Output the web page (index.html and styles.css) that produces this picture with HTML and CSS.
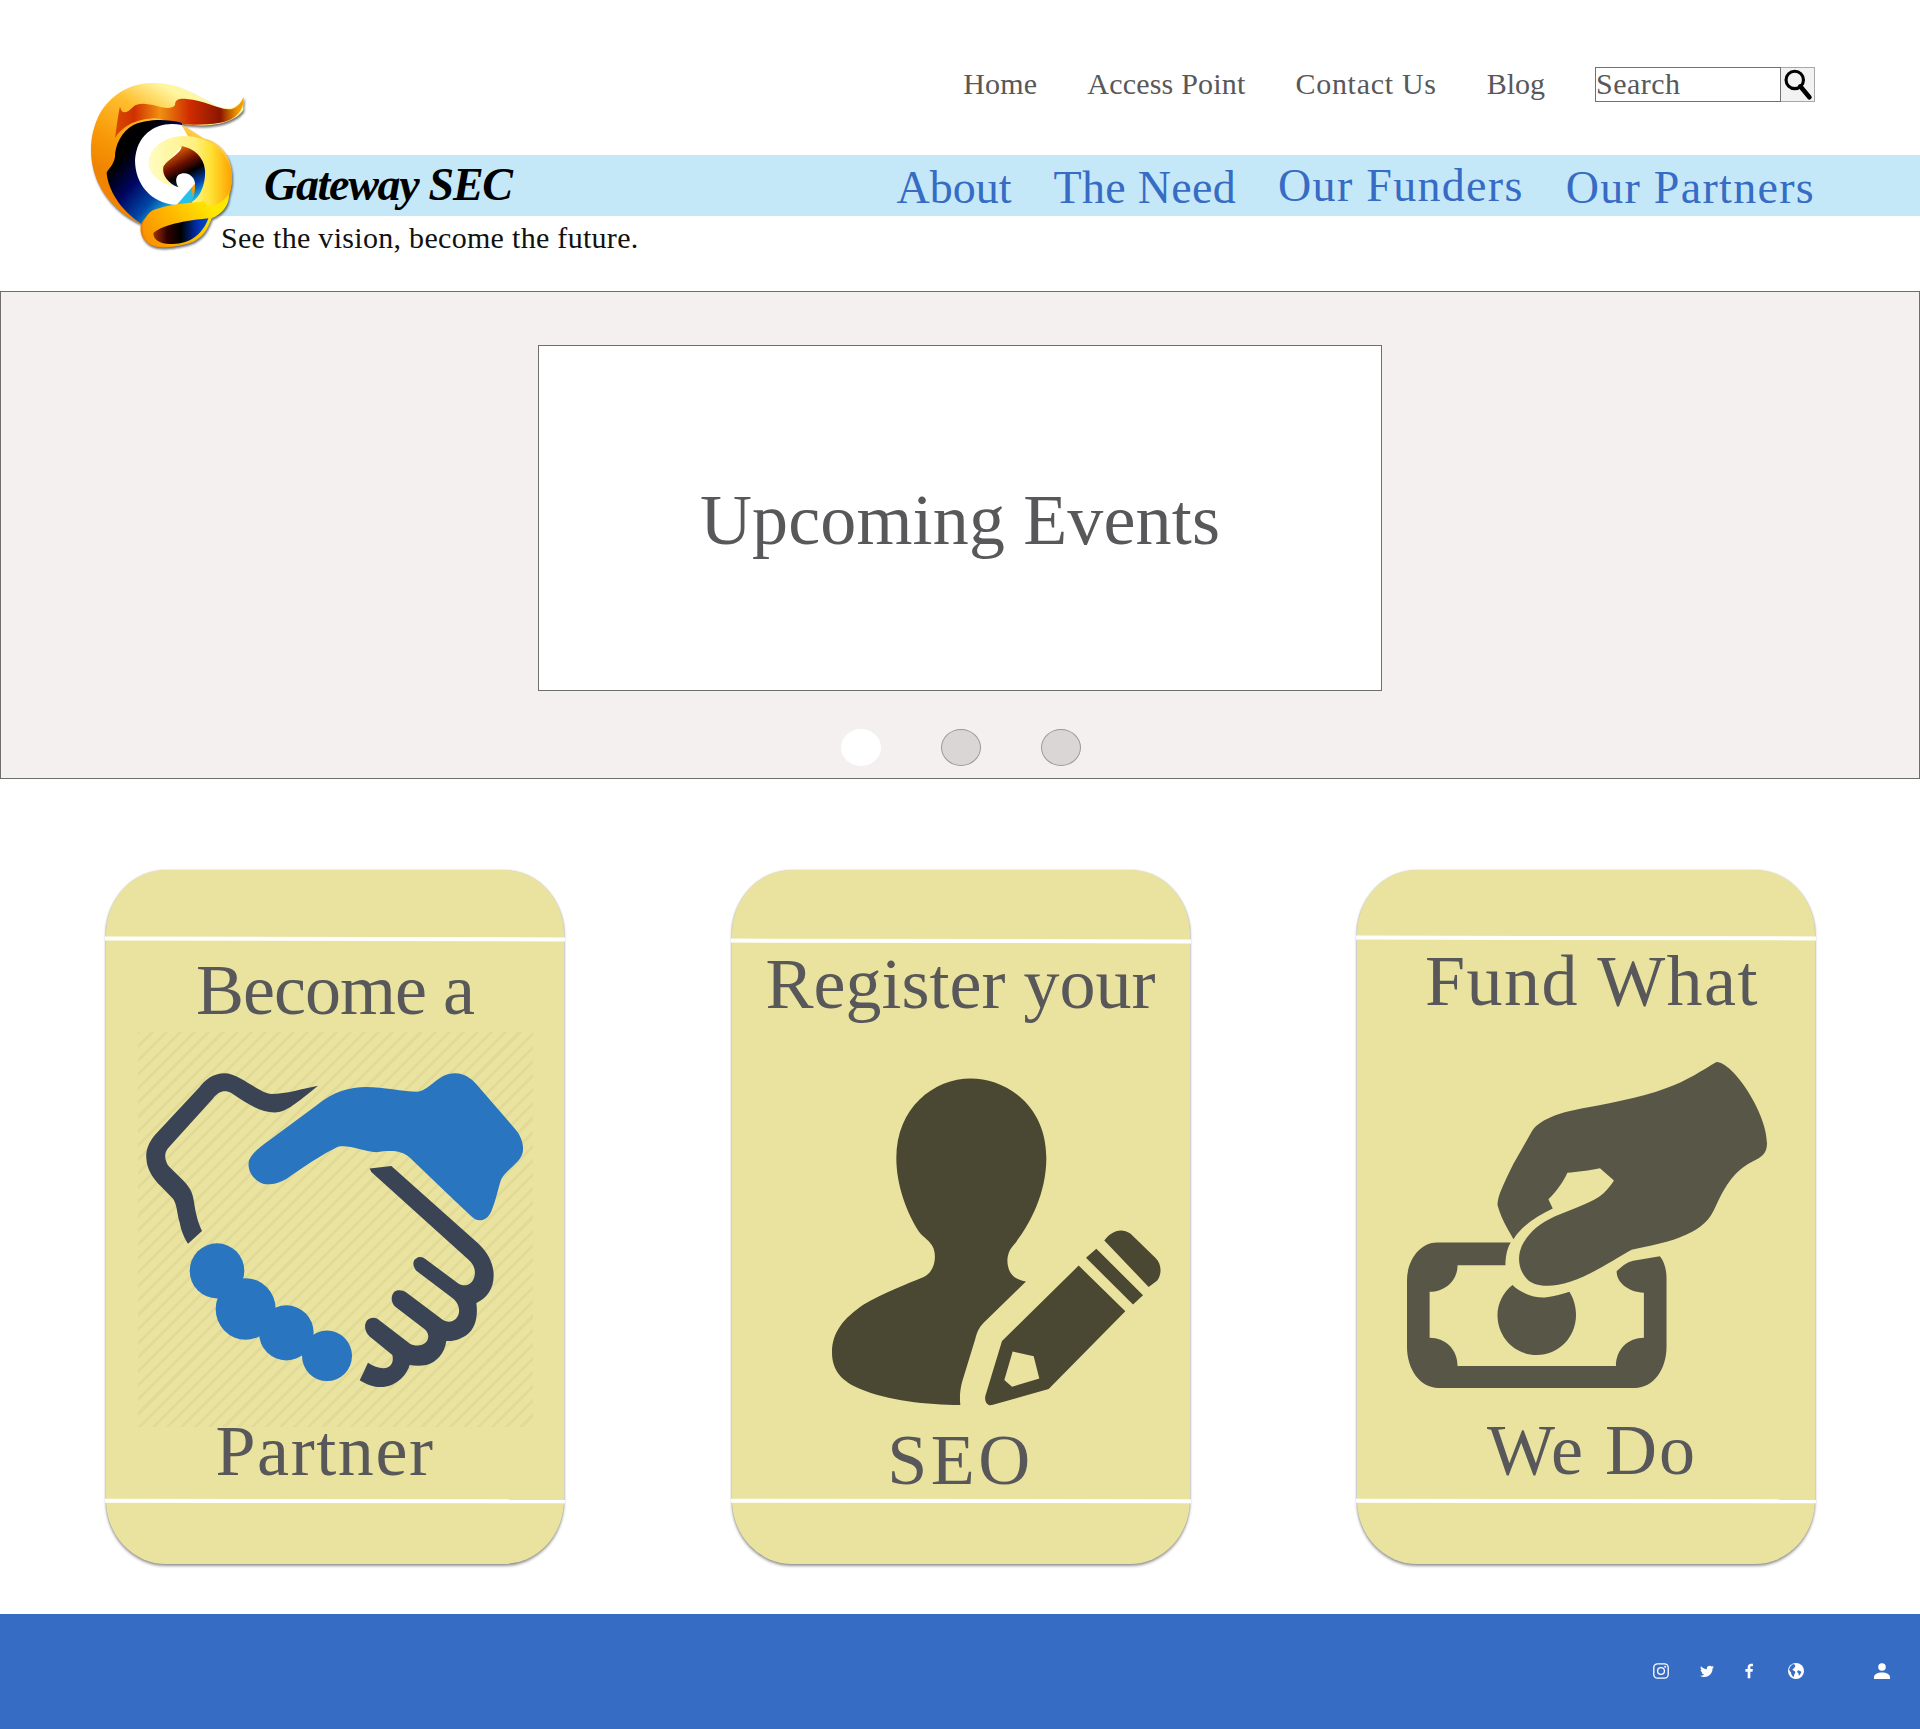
FILE: index.html
```html
<!DOCTYPE html>
<html lang="en">
<head>
<meta charset="utf-8">
<title>Gateway SEC</title>
<link rel="stylesheet" href="styles.css">
</head>
<body>
<header class="site-header">
  <svg class="logo" viewBox="0 0 540 570" aria-label="Gateway SEC logo">
    <defs>
      <linearGradient id="lgBody" gradientUnits="userSpaceOnUse" x1="230" y1="35" x2="70" y2="300">
        <stop offset="0" stop-color="#fff6a0"/><stop offset=".3" stop-color="#ffc030"/><stop offset=".7" stop-color="#f89a08"/><stop offset="1" stop-color="#f08400"/>
      </linearGradient>
      <linearGradient id="lgFlame" gradientUnits="userSpaceOnUse" x1="105" y1="0" x2="490" y2="0">
        <stop offset="0" stop-color="#d84a00"/><stop offset=".15" stop-color="#d03000"/><stop offset=".35" stop-color="#f09010"/><stop offset=".58" stop-color="#cf2c00"/><stop offset=".82" stop-color="#8a1600"/><stop offset=".95" stop-color="#f09400"/><stop offset="1" stop-color="#f8a000"/>
      </linearGradient>
      <linearGradient id="lgSwoosh" gradientUnits="userSpaceOnUse" x1="120" y1="270" x2="285" y2="410">
        <stop offset="0" stop-color="#000"/><stop offset=".35" stop-color="#000560"/><stop offset=".7" stop-color="#0048a8"/><stop offset="1" stop-color="#28c0e8"/>
      </linearGradient>
      <linearGradient id="lgBall" gradientUnits="userSpaceOnUse" x1="210" y1="0" x2="456" y2="0">
        <stop offset="0" stop-color="#fffcc0"/><stop offset=".55" stop-color="#fff080"/><stop offset=".75" stop-color="#ffe030"/><stop offset="1" stop-color="#ffa000"/>
      </linearGradient>
      <linearGradient id="lgTail" gradientUnits="userSpaceOnUse" x1="380" y1="390" x2="200" y2="520">
        <stop offset="0" stop-color="#ffe800"/><stop offset=".5" stop-color="#ffb800"/><stop offset="1" stop-color="#f89000"/>
      </linearGradient>
      <linearGradient id="lgStripe" gradientUnits="userSpaceOnUse" x1="220" y1="0" x2="385" y2="0">
        <stop offset="0" stop-color="#a03000"/><stop offset=".25" stop-color="#300200"/><stop offset=".5" stop-color="#000"/><stop offset=".8" stop-color="#0030b0"/><stop offset="1" stop-color="#0048d0"/>
      </linearGradient>
      <linearGradient id="lgCore" gradientUnits="userSpaceOnUse" x1="280" y1="235" x2="360" y2="385">
        <stop offset="0" stop-color="#f07000"/><stop offset=".3" stop-color="#701000"/><stop offset=".5" stop-color="#000"/><stop offset=".72" stop-color="#003aa8"/><stop offset="1" stop-color="#20c8e8"/>
      </linearGradient>
    </defs>
    <path fill="url(#lgBody)" d="M490 80C478 112 445 122 410 108C360 85 310 45 240 40C160 32 95 70 60 130C25 195 25 275 55 340C80 395 130 440 183 462C175 495 195 530 240 532C300 535 360 510 390 445C430 430 456 380 456 320C456 260 420 215 370 205L300 160C370 175 460 165 490 120Z"/>
    <path fill="url(#lgFlame)" d="M105 205C110 170 115 130 120 110C125 135 140 130 160 110C175 97 200 100 230 108C255 115 275 118 285 105C285 90 295 85 320 87C370 90 410 115 445 118C465 118 485 100 490 80C495 110 475 150 420 158C380 165 330 165 300 162L230 145C170 145 125 170 105 205Z"/>
    <path fill="url(#lgSwoosh)" d="M305 158C260 146 200 146 160 165C125 185 105 225 105 260C100 290 80 300 80 310C85 360 120 420 185 462C190 440 230 410 300 402L340 396L330 300Z"/>
    <path fill="#fff" d="M305 165C240 150 170 185 165 270C165 340 210 400 290 405L380 300Z"/>
    <path fill="url(#lgBall)" d="M300 352C250 345 206 320 206 280C205 235 255 198 310 198C395 198 456 255 456 325C456 375 430 405 395 430L335 400L375 300L305 228L250 290Z"/>
    <path fill="url(#lgCore)" d="M305 228C305 250 265 265 250 290C245 315 265 340 295 352C288 340 285 325 295 315C310 305 330 310 340 325C350 340 345 375 335 395C360 385 378 340 375 300C372 260 340 235 305 228Z"/>
    <path fill="url(#lgTail)" d="M446 370C436 395 400 412 385 408C375 400 372 385 365 395C330 400 270 400 220 420C185 440 178 490 205 518C225 535 290 535 340 515C375 498 385 470 395 445C430 430 451 400 446 370Z"/>
    <path fill="url(#lgStripe)" d="M220 490C240 470 290 455 385 445C370 490 330 525 270 522C240 522 220 510 220 490Z"/>
  </svg>
  <div class="top-row">
    <nav class="top-nav">
      <a href="#">Home</a>
      <a href="#">Access Point</a>
      <a href="#" class="top-nav-wide">Contact Us</a>
      <a href="#" class="top-nav-tight">Blog</a>
    </nav>
    <form class="search">
      <input class="search-input" type="text" placeholder="Search">
      <button class="search-button" type="button" aria-label="Search">
        <svg viewBox="0 0 34 36" class="search-icon"><circle cx="14" cy="13" r="9.500" fill="none" stroke="#000" stroke-width="3.400"/><path d="M20 20L30 32" stroke="#000" stroke-width="5" stroke-linecap="round"/></svg>
      </button>
    </form>
  </div>
  <div class="band">
    <div class="wordmark">Gateway SEC</div>
    <nav class="main-nav">
      <a href="#">About</a>
      <a href="#" class="main-nav-mid">The Need</a>
      <a href="#" class="main-nav-wide main-nav-raised">Our Funders</a>
      <a href="#" class="main-nav-wide">Our Partners</a>
    </nav>
  </div>
  <p class="tagline">See the vision, become the future.</p>
</header>

<section class="hero">
  <div class="hero-slide"><h1 class="hero-title">Upcoming Events</h1></div>
  <div class="dots">
    <span class="dot dot-active"></span>
    <span class="dot"></span>
    <span class="dot"></span>
  </div>
</section>

<main class="cards">
  <article class="card card-partner">
    <span class="rule rule-top"></span>
    <span class="rule rule-bottom"></span>
    <h2 class="card-title">Become a</h2>
    <svg class="card-icon hatch" viewBox="145 375 1185 860" preserveAspectRatio="none">
      <path fill="#3a4454" d="M685 492C640 498 590 510 545 510C510 510 450 465 405 465C370 465 345 480 330 495L195 600C175 618 168 635 170 650C172 675 190 695 215 712L250 738C262 750 262 770 270 790C275 810 285 825 295 836L337 808C325 790 318 770 313 745C308 720 298 712 280 698L238 668C225 655 222 640 235 628L370 520C385 505 405 500 425 508C470 530 510 550 555 550C590 550 620 530 685 492Z"/>
      <path fill="#2a75bf" d="M478 655C485 640 510 625 540 610L680 535C730 505 780 495 830 495C880 495 940 505 985 505C1025 500 1045 465 1095 465C1130 465 1150 480 1170 497L1275 585C1295 600 1305 625 1298 640C1290 660 1250 675 1235 695C1225 715 1220 740 1205 765C1195 782 1175 790 1155 782C1135 770 1100 745 1075 728L960 648C935 632 900 632 860 637C820 635 780 620 745 625C700 640 640 670 590 695C560 708 530 710 510 702C485 692 472 672 478 655Z"/>
      <path fill="#3a4454" d="M840 672L905 667L1165 835C1195 855 1212 880 1212 905C1212 935 1190 955 1160 965C1165 990 1160 1020 1130 1035C1110 1045 1090 1048 1070 1048C1065 1075 1040 1095 1010 1100C995 1102 975 1102 960 1100C950 1125 915 1148 875 1148C850 1148 830 1142 810 1133C820 1120 828 1105 835 1095C855 1105 880 1110 895 1105C908 1100 912 1090 908 1078L840 1038C825 1028 822 1012 832 1003C842 995 858 995 868 1002L960 1053C975 1060 1000 1060 1012 1048C1020 1038 1015 1028 1005 1022L915 972C903 962 903 948 915 940C925 935 940 937 950 942L1060 1002C1085 1012 1105 1000 1108 985C1110 970 1100 962 1090 955L980 895C968 885 968 872 980 868C990 862 1003 866 1012 872L1105 922C1125 932 1150 925 1155 905C1158 890 1150 880 1135 870L845 680Z"/>
      <g fill="#2a75bf">
        <ellipse cx="382" cy="895" rx="82" ry="60"/>
        <ellipse cx="468" cy="978" rx="90" ry="67"/>
        <ellipse cx="590" cy="1030" rx="82" ry="60"/>
        <ellipse cx="712" cy="1080" rx="75" ry="55"/>
      </g>
    </svg>
    <h2 class="card-title card-title-bottom">Partner</h2>
  </article>

  <article class="card card-seo">
    <span class="rule rule-top"></span>
    <span class="rule rule-bottom"></span>
    <h2 class="card-title">Register your</h2>
    <svg class="card-icon" viewBox="335 475 987 717" preserveAspectRatio="none">
      <g fill="#4a4732">
        <path d="M752 476C850 476 978 530 978 650C978 730 925 800 880 840C860 855 855 880 870 900C880 912 900 918 917 920L790 1010C775 1022 770 1030 765 1045L725 1140C718 1160 718 1175 720 1190C620 1190 500 1180 420 1155C365 1138 335 1115 335 1075C335 1030 370 1000 430 970C490 945 560 925 610 910C640 900 650 870 640 848C630 830 610 825 595 810C560 770 528 710 528 650C528 540 640 476 752 476Z"/>
        <path fill-rule="evenodd" d="M1075 885L1215 985L985 1155L815 1190C800 1192 792 1182 795 1170L845 1050ZM877 1073L940 1083L957 1132L875 1150L852 1135Z"/>
        <path d="M1128 848L1268 950L1238 970L1097 868Z"/>
        <path d="M1152 830C1170 812 1200 800 1230 815L1305 868C1325 882 1325 905 1310 918L1285 932Z"/>
      </g>
    </svg>
    <h2 class="card-title card-title-bottom">SEO</h2>
  </article>

  <article class="card card-fund">
    <span class="rule rule-top"></span>
    <span class="rule rule-bottom"></span>
    <h2 class="card-title">Fund What</h2>
    <svg class="card-icon" viewBox="200 438 1082 712" preserveAspectRatio="none">
      <g fill="#585646">
        <path d="M1130 438C1180 438 1282 550 1282 615C1282 640 1265 645 1240 655C1195 672 1165 695 1130 750C1110 785 1085 800 1040 815C990 832 930 840 875 848C820 870 750 905 690 918C640 930 590 930 565 915C535 895 530 865 545 840C565 810 600 790 645 775C700 757 760 745 790 725C805 715 815 705 822 697L780 670C750 675 710 678 682 680C670 700 650 720 625 738L638 758C590 775 545 795 520 825C500 800 480 775 472 750C472 730 490 705 520 660L575 590C590 570 640 553 690 545C790 530 900 518 980 495C1040 480 1090 455 1130 438Z"/>
        <path d="M290 832L512 832C500 845 496 865 496 882L352 882C352 915 315 940 268 940L268 1040C315 1040 352 1065 352 1102L828 1102C828 1065 865 1040 912 1040L912 942C865 940 830 920 830 895C845 885 860 875 880 872L960 862C972 872 980 890 980 910L980 1060C980 1110 940 1150 885 1150L295 1150C240 1150 200 1110 200 1060L200 915C200 870 240 832 290 832Z"/>
        <path d="M517 925C545 945 590 955 620 952C645 950 665 945 688 940C702 955 708 975 708 990C708 1040 655 1078 590 1078C525 1078 472 1040 472 990C472 965 490 940 517 925Z"/>
      </g>
    </svg>
    <h2 class="card-title card-title-bottom">We Do</h2>
  </article>
</main>

<footer class="site-footer">
  <a href="#" class="social" aria-label="Instagram">
    <svg viewBox="0 0 16 16"><rect x=".8" y=".8" width="14.400" height="14.400" rx="3.600" fill="none" stroke="#fff" stroke-width="1.300"/><circle cx="8" cy="8" r="3.400" fill="none" stroke="#fff" stroke-width="1.300"/><circle cx="12.200" cy="3.800" r="1" fill="#fff"/></svg>
  </a>
  <a href="#" class="social" aria-label="Twitter">
    <svg viewBox="0 0 24 24"><path fill="#fff" d="M22.46 6c-.77.35-1.6.58-2.46.69.88-.53 1.56-1.37 1.88-2.38-.83.5-1.75.85-2.72 1.05C18.37 4.5 17.26 4 16 4c-2.35 0-4.27 1.92-4.27 4.29 0 .34.04.67.11.98C8.28 9.09 5.11 7.38 3 4.79c-.37.63-.58 1.37-.58 2.15 0 1.49.75 2.81 1.91 3.56-.71 0-1.37-.2-1.95-.5v.03c0 2.08 1.48 3.82 3.44 4.21a4.22 4.22 0 0 1-1.93.07 4.28 4.28 0 0 0 4 2.98 8.521 8.521 0 0 1-5.33 1.84c-.34 0-.68-.02-1.02-.06C3.44 20.29 5.7 21 8.12 21 16 21 20.33 14.46 20.33 8.79c0-.19 0-.37-.01-.56.84-.6 1.56-1.36 2.14-2.23z"/></svg>
  </a>
  <a href="#" class="social social-narrow" aria-label="Facebook">
    <svg viewBox="0 0 12 24"><path fill="#fff" d="M4 23V13H.6V9H4V6.500C4 2.800 6.200 1 9.300 1c1.300 0 2.300.1 2.600.15V4.800H9.900C8.300 4.800 8 5.600 8 6.800V9h3.800l-.5 4H8v10z"/></svg>
  </a>
  <a href="#" class="social social-globe" aria-label="Website">
    <svg viewBox="0 0 16 16"><circle cx="8" cy="8" r="8" fill="#fff"/><path fill="#366cc4" d="M4.800 1.300C6 1.200 7 1.700 7.300 2.500c.2 1-.6 1.300-.8 2.100-.2.900-1.200 1-1.700 1.500-.5.600.1 1.400.9 1.600 1 .2 1.600.8 1.500 1.700-.1 1-.8 1.300-.9 2.200l-.6 2.500C4 13.200 3 11 3 9.500 2.300 8.700 1.400 7.800 1.100 6.800 1.600 4.500 3 2.400 4.800 1.300ZM9.500 7.800c.9-.5 2.300-.2 3.100.4.900.5.800 1.200.2 2-.5.900-1 1.900-1.600 2.400-.6.200-.5-1-.6-1.700-.1-.8-.8-1-1.200-1.600-.3-.6-.3-1.200.1-1.500Z"/></svg>
  </a>
  <a href="#" class="social social-user" aria-label="Account">
    <svg viewBox="0 0 16 16"><circle cx="8" cy="4" r="3.800" fill="#fff"/><path fill="#fff" d="M0 16v-1.800C0 11 3.500 9.400 8 9.400s8 1.600 8 4.800V16Z"/></svg>
  </a>
</footer>
</body>
</html>
```
FILE: styles.css
```css
* { box-sizing: border-box; }

html, body { margin: 0; padding: 0; }

body {
  width: 1920px;
  height: 1729px;
  overflow: hidden;
  background: #fff;
  color: #58585a;
  font-family: "Liberation Serif", "Times New Roman", serif;
}

a { color: inherit; text-decoration: none; }

.site-header {
  position: relative;
  height: 291px;
  padding-top: 67px;
}

.logo {
  position: absolute;
  left: 80px;
  top: 70px;
  width: 180px;
  height: 190px;
  z-index: 2;
  filter: drop-shadow(1px 2px 1px rgba(0, 0, 0, .55));
}

.top-row {
  display: flex;
  justify-content: flex-end;
  gap: 50px;
  height: 35px;
  margin-bottom: 53px;
  padding-right: 105px;
}

.top-nav {
  display: flex;
  gap: 50px;
  margin-top: -1px;
  font-size: 30px;
  line-height: 35px;
  letter-spacing: .2px;
}

.top-nav-wide { letter-spacing: .7px; }
.top-nav-tight { letter-spacing: 0; }

.search { display: flex; margin: 0; }

.search-input {
  width: 186px;
  height: 35px;
  margin: 0;
  padding: 0 0 2px;
  border: 1px solid #707070;
  border-radius: 0;
  background: #fff;
  outline: 0;
  font: 30px/31px "Liberation Serif", serif;
  letter-spacing: .5px;
  color: #58585a;
}

.search-input::placeholder { color: #58585a; opacity: 1; }

.search-button {
  display: flex;
  width: 34px;
  height: 35px;
  margin: 0;
  padding: 0;
  border: 1px solid #a8a8a8;
  border-left: 0;
  background: #f2f2f2;
}

.search-icon { width: 33px; height: 33px; }

.band {
  display: flex;
  justify-content: space-between;
  height: 61px;
  margin-left: 207px;
  padding: 3px 105px 0 57px;
  background: #c5e8f9;
}

.wordmark {
  font-size: 46px;
  font-style: italic;
  font-weight: 700;
  line-height: 54px;
  letter-spacing: -1.300px;
  color: #000;
  white-space: nowrap;
}

.main-nav {
  display: flex;
  gap: 42px;
  padding-top: 1px;
  font-size: 46px;
  line-height: 58px;
  color: #366cc4;
}

.main-nav-mid { letter-spacing: .3px; }
.main-nav-wide { letter-spacing: 1.300px; }
.main-nav-raised { margin-top: -2px; }

.tagline {
  margin: 6px 0 0 221px;
  font-size: 30px;
  line-height: 32px;
  letter-spacing: .3px;
  color: #111;
}

.hero {
  height: 488px;
  padding-top: 53px;
  border: 1px solid #6e6e6e;
  background: #f3f0ef;
}

.hero-slide {
  display: flex;
  align-items: center;
  justify-content: center;
  width: 844px;
  height: 346px;
  margin: 0 auto;
  padding-top: 3px;
  border: 1px solid #6e6e6e;
  background: #fff;
}

.hero-title {
  margin: 0;
  font-size: 72px;
  font-weight: 400;
  line-height: 80px;
  letter-spacing: .15px;
}

.dots {
  display: flex;
  justify-content: center;
  gap: 60px;
  margin-top: 38px;
  padding-left: 1px;
}

.dot {
  width: 40px;
  height: 37px;
  border: 1px solid #9a9a9a;
  border-radius: 50%;
  background: #d9d6d5;
}

.dot-active { border-color: #fff; background: #fff; }

.cards {
  display: flex;
  gap: 167.500px;
  padding: 91px 0 50px 106px;
}

.card {
  position: relative;
  display: flex;
  flex-direction: column;
  width: 458px;
  height: 694px;
  border-radius: 60px / 64px;
  background: #eae3a0;
  box-shadow: 0 2px 3px rgba(0, 0, 0, .4), 0 0 2px rgba(0, 0, 0, .18);
}

.rule {
  position: absolute;
  left: -1px;
  right: -1px;
  height: 4px;
  background: #fff;
}

.rule-top { top: 67px; transform: rotate(.1deg); }
.rule-bottom { top: 629px; transform: rotate(.08deg); }

.card-title {
  margin: 0;
  font-size: 72px;
  font-weight: 400;
  line-height: 40px;
  text-align: center;
  white-space: nowrap;
}

.card-icon { display: block; flex: none; }

.hatch {
  background: repeating-linear-gradient(-45deg, #eae3a0 0 7px, #e2db98 7px 10px);
}

.card-partner { padding-top: 100px; }
.card-partner .card-title { letter-spacing: -1px; }
.card-partner .card-icon { width: 395px; height: 395px; margin: 22px 0 0 32px; }
.card-partner .card-title-bottom { margin-top: 4px; padding-right: 20px; letter-spacing: 1.600px; }

.card-seo { padding-top: 94px; }
.card-seo .rule-top { top: 69px; }
.card-seo .card-icon { width: 329px; height: 328px; margin: 74px 0 0 100px; }
.card-seo .card-title-bottom { margin-top: 34px; letter-spacing: 3.500px; }

.card-fund { padding-top: 91px; }
.card-fund .rule-top { top: 66px; }
.card-fund .card-title { padding-left: 12px; letter-spacing: 1.500px; }
.card-fund .card-icon { width: 360px; height: 326px; margin: 61px 0 0 50px; }
.card-fund .card-title-bottom { margin-top: 42px; letter-spacing: 2px; }

.site-footer {
  display: flex;
  align-items: center;
  gap: 30px;
  height: 115px;
  padding: 0 0 2px 1653px;
  background: #366cc4;
}

.social { display: block; flex: none; width: 16px; height: 16px; }
.social svg { display: block; width: 100%; height: 100%; }
.social-narrow { width: 8px; }
.social-globe { margin-left: 5px; }
.social-user { margin-left: 40px; }
```
